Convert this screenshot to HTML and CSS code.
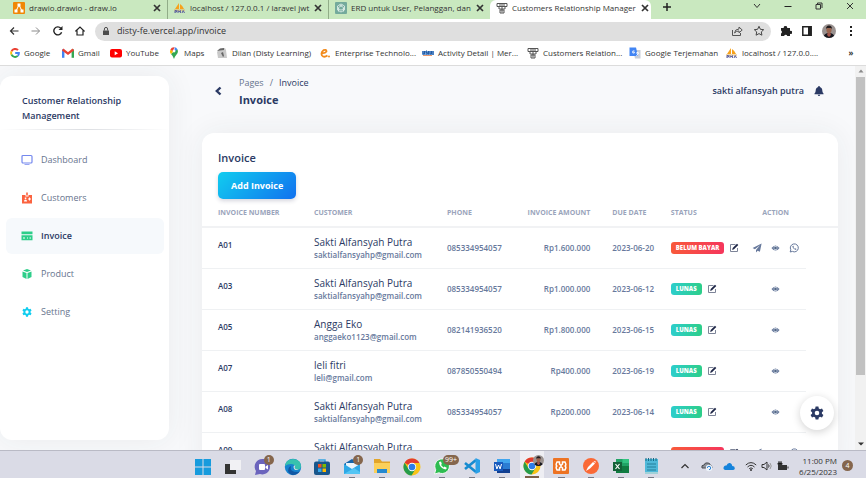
FILE: index.html
```html
<!DOCTYPE html>
<html lang="en">
<head>
<meta charset="utf-8">
<title>Customers Relationship Management</title>
<link rel="stylesheet" href="styles.css">
</head>
<body>
<svg class="sprite" aria-hidden="true">
  <symbol id="x" viewBox="0 0 10 10"><path d="M2 2l6 6M8 2L2 8" fill="none" stroke="currentColor" stroke-width="1.7"/></symbol>
  <symbol id="pma" viewBox="0 0 12 12"><path d="M5 1L1 7h4zM6 2v5h4Q9 4 6 2z" fill="#f7a21b"/><path d="M0 8h11" stroke="#e5b25c"/><path d="M1 11V8.500h1.500v1.500H1M4 11V8.500l1.200 1.500 1.200-1.500V11M8 11l1.200-2.500 1.300 2.500" fill="none" stroke="#5b5f9c"/></symbol>
  <symbol id="crm" viewBox="0 0 12 12"><path d="M1 1.500h10v3H1zM3 5v2h6V5M6 1.500v9M4 8h4v3H4zM4 2v2M8 2v2" fill="none" stroke="#555" stroke-width="1"/></symbol>
  <symbol id="edit" viewBox="0 0 10 10"><path d="M6.500 1.500h-5v7h7V5" fill="none" stroke="#7d8498" stroke-width="1"/><path d="M3.200 6.900l.5-2L8 .7l1.300 1.200L5 6.200z" fill="#1c2445"/></symbol>
  <symbol id="eye" viewBox="0 0 10 8"><path d="M.5 4Q5-1.700 9.500 4 5 9.700.5 4z" fill="#67799c"/><circle cx="5" cy="4" r="2.100" fill="#dfe4ec"/><circle cx="5" cy="4" r="1.500" fill="#526788"/></symbol>
  <symbol id="send" viewBox="0 0 10 10"><path d="M9.600.6L.6 5l2.300 1.300L8 2.200 4 7v2.600l1.600-1.900 2.300 1z" fill="#67799c"/></symbol>
  <symbol id="wa" viewBox="0 0 10 10"><path d="M1.200 9l.6-2.200A4 4 0 1 1 3.400 8.400z" fill="none" stroke="#67799c"/><path d="M3.300 3c.3 2 1.500 3.400 3.500 3.900l.7-1-1.300-.7-.6.5-1.100-1.200.4-.6-.5-1.200z" fill="#67799c"/></symbol>
  <symbol id="gear" viewBox="0 0 14 14"><path fill-rule="evenodd" d="M5.600.5h2.800l.4 1.900 1.300.8 1.900-.7 1.400 2.400-1.500 1.300v1.600l1.500 1.300-1.400 2.400-1.900-.7-1.300.8-.4 1.900H5.600l-.4-1.900-1.300-.8-1.900.7L.6 9.100l1.500-1.300V6.200L.6 4.900 2 2.500l1.900.7 1.300-.8zM7 4.700a2.300 2.300 0 1 0 0 4.600 2.300 2.300 0 0 0 0-4.600z" fill="currentColor"/></symbol>
  <symbol id="chrome" viewBox="0 0 18 18"><circle cx="9" cy="9" r="8.500" fill="#f9c316"/><path d="M9 9L1.600 4.700A8.500 8.500 0 0 1 16.400 5H9z" fill="#e33b2e"/><path d="M1.600 4.700A8.500 8.500 0 0 0 8.500 17.500L12.500 11 9 9 5.500 11z" fill="#269c4b"/><circle cx="9" cy="9" r="4.200" fill="#fff"/><circle cx="9" cy="9" r="3.300" fill="#2d7ce8"/></symbol>
  <symbol id="face" viewBox="0 0 14 14"><clipPath id="fc"><circle cx="7" cy="7" r="7"/></clipPath><g clip-path="url(#fc)"><path d="M0 0h14v14H0z" fill="#9a9290"/><path d="M1 14q1-5 6-5t6 5z" fill="#18181f"/><path d="M6 8h2l1 3-2 2-2-2z" fill="#a5544a"/><ellipse cx="7" cy="5.800" rx="2.600" ry="3.400" fill="#9a6650"/><path d="M4 5q0-3.500 3-3.500T10 5L9 4H5z" fill="#201a1c"/></g></symbol>
</svg>

<header class="browser">
  <div class="tabs">
    <div class="tab"><svg class="i12" viewBox="0 0 12 12"><rect width="12" height="12" rx="1" fill="#f08705"/><path d="M6 3L3 9M6 3l3 6" stroke="#fff"/><path d="M4.500 1.500h3v3h-3zM1.500 7.500h3v3h-3zM7.500 7.500h3v3h-3z" fill="#fff"/></svg><span>drawio.drawio - draw.io</span><button aria-label="Close tab"><svg class="i10"><use href="#x"/></svg></button></div>
    <div class="tab"><svg class="i12"><use href="#pma"/></svg><span>localhost / 127.0.0.1 / laravel jwt</span><button aria-label="Close tab"><svg class="i10"><use href="#x"/></svg></button></div>
    <div class="tab"><svg class="i12" viewBox="0 0 12 12"><rect width="12" height="12" rx="1" fill="#74aa9c"/><g fill="none" stroke="#e5f2ee" stroke-width=".8"><path d="M6 2l3.500 2v4L6 10 2.500 8V4zM4.500 3l4 2.500v4M7.500 3l-4 2.500v4M3 6.500l3 1.700 3.500-2"/></g></svg><span>ERD untuk User, Pelanggan, dan</span><button aria-label="Close tab"><svg class="i10"><use href="#x"/></svg></button></div>
    <div class="tab active"><svg class="i12"><use href="#crm"/></svg><span>Customers Relationship Manager</span><button aria-label="Close tab"><svg class="i10"><use href="#x"/></svg></button></div>
    <button class="plus" aria-label="New tab"><svg class="i10" viewBox="0 0 10 10"><path d="M5 1v8M1 5h8" stroke="#222" stroke-width="1.500"/></svg></button>
    <div class="window">
      <button aria-label="Search tabs"><svg class="i10" viewBox="0 0 10 10"><path d="M2 3l3 3.500L8 3" fill="none" stroke="#333"/></svg></button>
      <button aria-label="Minimize"><svg class="i10" viewBox="0 0 10 10"><path d="M1.500 5.500h7" stroke="#222"/></svg></button>
      <button aria-label="Restore"><svg class="i10" viewBox="0 0 10 10"><path d="M2 3.500h4.500V8H2zM3.500 3V2H8v5" fill="none" stroke="#333"/></svg></button>
      <button aria-label="Close"><svg class="i10" viewBox="0 0 10 10"><path d="M2 2l6 6M8 2L2 8" stroke="#333"/></svg></button>
    </div>
  </div>

  <div class="toolbar">
    <div class="navs">
      <button aria-label="Back"><svg class="i10" viewBox="0 0 10 10"><path d="M9.500 5H1.500M5 1.500L1.500 5 5 8.500" fill="none" stroke="#333" stroke-width="1.200"/></svg></button>
      <button aria-label="Forward"><svg class="i10" viewBox="0 0 10 10"><path d="M.5 5h8M5 1.500L8.500 5 5 8.500" fill="none" stroke="#8b8b8b"/></svg></button>
      <button aria-label="Reload"><svg class="i10" viewBox="0 0 10 10"><path d="M8.600 6.300A4 4 0 1 1 7.800 2.200" fill="none" stroke="#222" stroke-width="1.400"/><path d="M9.500 0v4h-4z" fill="#222"/></svg></button>
      <button aria-label="Home"><svg class="i10" viewBox="0 0 10 10"><path d="M.8 5L5 1l4.200 4H8v4H2V5z" fill="none" stroke="#222" stroke-width="1.200"/></svg></button>
    </div>
    <div class="omnibox">
      <svg class="i10" viewBox="0 0 10 10"><path d="M2 4.500h6V9H2z" fill="#4c4c4c"/><path d="M3.400 4.500V3a1.600 1.600 0 0 1 3.200 0v1.500" fill="none" stroke="#4c4c4c"/></svg>
      <input aria-label="Address" value="disty-fe.vercel.app/invoice">
      <button aria-label="Share"><svg class="i12" viewBox="0 0 12 12"><path d="M1.500 5v5.500h8V8M3.500 8q.5-4 4.500-4V2l3.200 3L8 7.800V6Q5 6 3.500 8z" fill="none" stroke="#555"/></svg></button>
      <button aria-label="Bookmark"><svg class="i12" viewBox="0 0 12 12"><path d="M6 1.300l1.400 3 3.300.4-2.400 2.200.6 3.300L6 8.600l-2.900 1.600.6-3.300-2.400-2.200 3.300-.4z" fill="none" stroke="#444"/></svg></button>
    </div>
    <div class="tools">
      <button aria-label="Extensions"><svg class="i12" viewBox="0 0 12 12"><path d="M1 3h2.800a1.700 1.700 0 1 1 3.300 0H10v3a1.600 1.600 0 1 1 0 2.800V11H7.300a1.700 1.700 0 0 0-3.200 0H1V8.600a1.700 1.700 0 0 0 0-3z" fill="#222"/></svg></button>
      <button aria-label="Side panel"><svg class="i12" viewBox="0 0 12 12"><path d="M1.800 1.800h8.400v8.400H1.800z" fill="none" stroke="#222" stroke-width="1.500"/><path d="M7 2h3v8H7z" fill="#222"/></svg></button>
      <button aria-label="Profile"><svg class="i14"><use href="#face"/></svg></button>
      <button aria-label="Menu"><svg class="i12" viewBox="0 0 12 12"><path d="M5 1h2v2H5zM5 5h2v2H5zM5 9h2v2H5z" fill="#222"/></svg></button>
    </div>
  </div>

  <nav class="bookmarks" aria-label="Bookmarks">
    <a href="#"><svg class="i10" viewBox="0 0 10 10"><g fill="none" stroke-width="1.900"><path d="M8 2.200A3.900 3.900 0 0 0 1.500 3.400" stroke="#ea4335"/><path d="M1.500 3.400a3.900 3.900 0 0 0 0 3.200" stroke="#fbbc05"/><path d="M1.500 6.600A3.900 3.900 0 0 0 7.700 7.900" stroke="#34a853"/><path d="M7.700 7.900A3.700 3.700 0 0 0 8.900 5H5.200" stroke="#4285f4"/></g></svg>Google</a>
    <a href="#"><svg class="i12" viewBox="0 0 10 10"><path d="M1 9V2" stroke="#4285f4" stroke-width="2"/><path d="M9 9V2" stroke="#34a853" stroke-width="2"/><path d="M.5 2L5 5.500 9.500 2" fill="none" stroke="#ea4335" stroke-width="2"/></svg>Gmail</a>
    <a href="#"><svg class="i12" viewBox="0 0 12 12"><rect y="2" width="12" height="8.500" rx="2" fill="#f00"/><path d="M4.700 4.300v4L8 6.300z" fill="#fff"/></svg>YouTube</a>
    <a href="#"><svg class="i12" viewBox="0 0 10 10"><path d="M5 10Q4 7 2.500 5.800L7.500 1.500Q9.300 4 7 6.500 5.500 8 5 10z" fill="#34a853"/><path d="M2.500 6Q1 4 2 2l2.500 1.500z" fill="#fbbc05"/><path d="M2 2q1-2 3.500-1.700L4 3.600z" fill="#ea4335"/><path d="M5.500.3q1.500.2 2.300 1.500L5.500 4z" fill="#4285f4"/><circle cx="5" cy="3.400" r="1.200" fill="#fff"/></svg>Maps</a>
    <a href="#"><svg class="i12" viewBox="0 0 12 12"><path d="M1 5l2-3 6-1 1 2 1 8H2z" fill="#c9c9c9"/><path d="M1 4l3-2.500 4-.5v2L4 3.500zM5 6l2-1 1 4-1 1" fill="#666"/></svg>Dilan (Disty Learning)</a>
    <a href="#"><svg class="i12" viewBox="0 0 12 12"><path d="M8.500 8.500Q5 11 3 8.500 1.500 5.500 4.500 3.200 7.500 2 7.500 4.500 6 6.500 2.800 6" fill="none" stroke="#f28b1d" stroke-width="1.800"/><circle cx="10" cy="9.500" r="1" fill="#f28b1d"/></svg>Enterprise Technolo...</a>
    <a href="#"><svg class="i12" viewBox="0 0 12 12"><path d="M0 4h12v4H0z" fill="#76a7dc"/><path d="M1 4v3h1.500V4M5 4H4v1.500h1.300V7H4M6.500 4v3.500M8 4v3h1.500V4M11 4v4" fill="none" stroke="#225ba5"/><path d="M1 8.500h9" stroke="#e9986d"/></svg>Activity Detail | Mer...</a>
    <a href="#"><svg class="i12"><use href="#crm"/></svg>Customers Relation...</a>
    <a href="#"><svg class="i12" viewBox="0 0 12 12"><path d="M4 3h7.500v8.500H6z" fill="#c8ced8"/><path d="M.5.500H7L9 9H.5z" fill="#4285f4"/><path d="M5.500 4H3.800v2h1.500V5M7 6h3M8.500 5v1M7.500 9l2-3" fill="none" stroke="#fff" stroke-width=".9"/></svg>Google Terjemahan</a>
    <a href="#"><svg class="i12"><use href="#pma"/></svg>localhost / 127.0.0....</a>
    <button class="more" aria-label="More bookmarks">»</button>
  </nav>
</header>

<div class="app">
  <aside class="sidebar">
    <h1>Customer Relationship Management</h1>
    <hr>
    <nav>
      <a href="#"><svg class="i12" viewBox="0 0 12 12"><rect x="1" y="1.500" width="10" height="7.500" rx="1" fill="none" stroke="#7488ee" stroke-width="1.200"/><path d="M3.500 10.500h5" stroke="#9aa7f3"/></svg>Dashboard</a>
      <a href="#"><svg class="i12" viewBox="0 0 12 12"><path d="M1 3h3.500v1.500h3V3H11v8.500H1zM5.200.5h1.600v3H5.200z" fill="#fb6340"/><path d="M3 9.500q0-2 1.500-2T6 9.500zM3.800 5.500h1.500v1.500H3.800zM7 6.500h3v1H7zM8 5.500h1v3H8z" fill="#fff"/></svg>Customers</a>
      <a href="#" class="current" aria-current="page"><svg class="i12" viewBox="0 0 12 12"><path d="M.5 1.500h11v2.800H.5zM.5 5.300h11v5H.5z" fill="#2dce89"/><path d="M2 8h2M6 8h1M8.500 8h1.500" stroke="#fff"/></svg>Invoice</a>
      <a href="#"><svg class="i12" viewBox="0 0 12 12"><path d="M6 1l4 1.500L6 4 2 2.500zM1.500 3.500l4 1.500v6L1.500 9zM10.500 3.500l-4 1.500v6l4-2z" fill="#2dce89"/></svg>Product</a>
      <a href="#" class="setting"><svg class="i10"><use href="#gear"/></svg>Setting</a>
    </nav>
  </aside>

  <main>
    <div class="pagebar">
      <button class="back" aria-label="Go back"><svg class="i10" viewBox="0 0 10 10"><path d="M7.500 1.500L3.800 5l3.700 3.500" fill="none" stroke="#2b3a64" stroke-width="2.400"/></svg></button>
      <div class="crumbs">
        <p><a href="#">Pages</a><i>/</i>Invoice</p>
        <h2>Invoice</h2>
      </div>
      <span class="user">sakti alfansyah putra</span>
      <button class="bell" aria-label="Notifications"><svg class="i10" viewBox="0 0 10 10"><path d="M4.300 0h1.400v1q2.600.6 2.600 3.500 0 2 1.200 3v.8H.5v-.8q1.200-1 1.200-3Q1.700 1.600 4.300 1zM3.700 8.800h2.600Q6 10 5 10t-1.300-1.200z" fill="#2b3a64"/></svg></button>
    </div>

    <section class="card">
      <div class="cardhead">
        <h3>Invoice</h3>
        <button class="add">Add Invoice</button>
      </div>
      <table>
        <colgroup><col class="c-no"><col class="c-cust"><col class="c-phone"><col class="c-amt"><col class="c-due"><col class="c-stat"><col class="c-act"><col></colgroup>
        <thead>
          <tr><th>Invoice Number</th><th>Customer</th><th>Phone</th><th class="amt">Invoice Amount</th><th>Due Date</th><th>Status</th><th class="act">Action</th><th></th></tr>
        </thead>
        <tbody>
          <tr><td class="no">A01</td><td><strong>Sakti Alfansyah Putra</strong><small>saktialfansyahp@gmail.com</small></td><td>085334954057</td><td class="amt">Rp1.600.000</td><td>2023-06-20</td><td><div class="status"><span class="badge due">Belum Bayar</span><button aria-label="Edit status"><svg class="i10"><use href="#edit"/></svg></button></div></td><td class="act"><div class="actions"><button aria-label="Send"><svg class="i10"><use href="#send"/></svg></button><button aria-label="View"><svg class="eye"><use href="#eye"/></svg></button><button aria-label="WhatsApp"><svg class="i10"><use href="#wa"/></svg></button></div></td></tr>
          <tr><td class="no">A03</td><td><strong>Sakti Alfansyah Putra</strong><small>saktialfansyahp@gmail.com</small></td><td>085334954057</td><td class="amt">Rp1.000.000</td><td>2023-06-12</td><td><div class="status"><span class="badge">Lunas</span><button aria-label="Edit status"><svg class="i10"><use href="#edit"/></svg></button></div></td><td class="act"><div class="actions"><button aria-label="View"><svg class="eye"><use href="#eye"/></svg></button></div></td></tr>
          <tr><td class="no">A05</td><td><strong>Angga Eko</strong><small>anggaeko1123@gmail.com</small></td><td>082141936520</td><td class="amt">Rp1.800.000</td><td>2023-06-15</td><td><div class="status"><span class="badge">Lunas</span><button aria-label="Edit status"><svg class="i10"><use href="#edit"/></svg></button></div></td><td class="act"><div class="actions"><button aria-label="View"><svg class="eye"><use href="#eye"/></svg></button></div></td></tr>
          <tr><td class="no">A07</td><td><strong>leli fitri</strong><small>leli@gmail.com</small></td><td>087850550494</td><td class="amt">Rp400.000</td><td>2023-06-19</td><td><div class="status"><span class="badge">Lunas</span><button aria-label="Edit status"><svg class="i10"><use href="#edit"/></svg></button></div></td><td class="act"><div class="actions"><button aria-label="View"><svg class="eye"><use href="#eye"/></svg></button></div></td></tr>
          <tr><td class="no">A08</td><td><strong>Sakti Alfansyah Putra</strong><small>saktialfansyahp@gmail.com</small></td><td>085334954057</td><td class="amt">Rp200.000</td><td>2023-06-14</td><td><div class="status"><span class="badge">Lunas</span><button aria-label="Edit status"><svg class="i10"><use href="#edit"/></svg></button></div></td><td class="act"><div class="actions"><button aria-label="View"><svg class="eye"><use href="#eye"/></svg></button></div></td></tr>
          <tr><td class="no">A09</td><td><strong>Sakti Alfansyah Putra</strong><small>&nbsp;</small></td><td></td><td></td><td></td><td><div class="status"><span class="badge due">Belum Bayar</span><button aria-label="Edit status"><svg class="i10"><use href="#edit"/></svg></button></div></td><td class="act"><div class="actions"><button aria-label="Send"><svg class="i10"><use href="#send"/></svg></button><button aria-label="View"><svg class="eye"><use href="#eye"/></svg></button><button aria-label="WhatsApp"><svg class="i10"><use href="#wa"/></svg></button></div></td></tr>
        </tbody>
      </table>
    </section>
  </main>

  <div class="scroll" aria-hidden="true">
    <svg viewBox="0 0 8 6"><path d="M1.500 4.500L4 1.500l2.500 3z" fill="#8a8a8a"/></svg>
    <div class="track"><div class="thumb"></div></div>
    <svg viewBox="0 0 8 6"><path d="M1 1.500L4 4.500l3-3z" fill="#333"/></svg>
  </div>
  <button class="fab" aria-label="Configure"><svg class="i14"><use href="#gear"/></svg></button>
</div>

<footer class="taskbar">
  <div class="apps">
    <button aria-label="Start"><svg class="i18" viewBox="0 0 18 18"><path d="M1 1h7.500v7.500H1zM9.500 1H17v7.500H9.500zM1 9.500h7.500V17H1zM9.500 9.500H17V17H9.500z" fill="#179bdd"/></svg></button>
    <button aria-label="Task view"><svg class="i18" viewBox="0 0 18 18"><path d="M1 6h11v10H1z" fill="#333"/><path d="M6 2h11v10H6z" fill="#f1f1f4"/></svg></button>
    <button aria-label="Chat"><svg class="i18" viewBox="0 0 18 18"><path d="M1 17l1-4A7.700 7.700 0 1 1 6 16z" fill="#6b64bd"/><rect x="5" y="6" width="6" height="6" rx="1" fill="#fff"/><path d="M11.500 8.500L14 7v4.500L11.500 10z" fill="#fff"/></svg><span class="count">1</span></button>
    <button aria-label="Edge"><svg class="i18" viewBox="0 0 18 18"><circle cx="9" cy="9" r="8.200" fill="#1683cf"/><path d="M1 8Q2 1 9.500 1 17 2 17 8q0 4-5 4-3-.5-1-3 0-3-4-3-3.500 0-6 2z" fill="#38c2ae"/><path d="M7 8q-2 6 7 6l2-1q-3 4.500-8 4-5-2-3.500-6.500Q5 8.500 7 8z" fill="#1057a4"/><path d="M9.500 9q0-2 1.800-1.500Q10 9.500 11.500 11l3 .8Q10 13 9.500 9z" fill="#dadbe6"/></svg></button>
    <button aria-label="Store"><svg class="i18" viewBox="0 0 18 18"><path d="M6 4V2h6v2" fill="none" stroke="#36a4df" stroke-width="1.500"/><rect x="1" y="3.500" width="16" height="13.500" rx="2" fill="#18568c"/><path d="M5 6h3.500v3.500H5z" fill="#f25022"/><path d="M9.500 6H13v3.500H9.500z" fill="#7fba00"/><path d="M5 10.500h3.500V14H5z" fill="#35a7ec"/><path d="M9.500 10.500H13V14H9.500z" fill="#ffb900"/></svg></button>
    <button class="open" aria-label="Mail"><svg class="i18" viewBox="0 0 18 18"><path d="M1 7l8-5 8 5v9H1z" fill="#1264ab"/><path d="M3 6h12v6l-6 3-6-3z" fill="#e9f5fc"/><path d="M1 7l8 5 8-5v10H1z" fill="#2ea8e6"/><path d="M1 17l10-6 6 4v2z" fill="#53c5f4"/></svg><span class="count">1</span></button>
    <button class="open" aria-label="File Explorer"><svg class="i18" viewBox="0 0 18 18"><path d="M1 2h6l2 2.500h8V13H1z" fill="#e2a52a"/><path d="M1 6h16v10H1z" fill="#fbd05a"/><path d="M4 12h10v4H4z" fill="#2589cf"/></svg></button>
    <button aria-label="Chrome"><svg class="i18"><use href="#chrome"/></svg></button>
    <button class="open" aria-label="WhatsApp"><svg class="i18" viewBox="0 0 18 18"><path d="M1.500 17l1.200-4.300A7.300 7.300 0 1 1 6 15.800z" fill="#2ebc51" stroke="#f5f8f5"/><path d="M6 5q.5 6 6.500 7.500L14 11l-2.500-1.500-1 1L8 8l.8-1L8 4.500z" fill="#fff"/></svg><span class="count">99+</span></button>
    <button class="open" aria-label="Visual Studio Code"><svg class="i18" viewBox="0 0 18 18"><path d="M13 3L2 12M13 15L2 6" stroke="#168bd0" stroke-width="2.600"/><path d="M12.500 1L17 3v12l-4.500 2z" fill="#2aa0e7"/></svg></button>
    <button class="open" aria-label="Word"><svg class="i18" viewBox="0 0 18 18"><path d="M4 2h13v14H4z" fill="#2b7cd3"/><path d="M4 2h13v4H4z" fill="#41a5ee"/><path d="M4 12h13v4H4z" fill="#103f91"/><path d="M1 5h9v9H1z" fill="#185abd"/><path d="M2.500 7l1.400 5 1.600-4 1.600 4 1.400-5" fill="none" stroke="#fff"/></svg></button>
    <button class="open focus" aria-label="Chrome window"><svg class="i18"><use href="#chrome"/></svg><svg class="who"><use href="#face"/></svg></button>
    <button class="open" aria-label="XAMPP"><svg class="i18" viewBox="0 0 18 18"><rect x="1" y="1" width="16" height="16" rx="1" fill="#ed7323"/><path d="M5 5h2.500v2L9 8.500 10.500 7V5H13q2 4-.5 4 2.500 0 .5 4h-2.500v-2L9 9.500 7.500 11v2H5q-2-4 .5-4Q3 9 5 5z" fill="none" stroke="#fff" stroke-width="1.500"/></svg></button>
    <button class="open" aria-label="Postman"><svg class="i18" viewBox="0 0 18 18"><circle cx="9" cy="9" r="8" fill="#fa6936"/><path d="M4 14l2-4 5-5 2 1.500-5 5zM11.500 4.500l2-.5v2z" fill="#fff"/></svg></button>
    <button class="open" aria-label="Excel"><svg class="i18" viewBox="0 0 18 18"><path d="M4 2h13v14H4z" fill="#21a366"/><path d="M10.500 2H17v4h-6.500z" fill="#33c481"/><path d="M4 9h13v7H4z" fill="#107c41"/><path d="M1 5h9v9H1z" fill="#146239"/><path d="M3.500 7l4 5M7.500 7l-4 5" stroke="#fff" stroke-width="1.200"/></svg></button>
    <button class="open" aria-label="Notepad"><svg class="i18" viewBox="0 0 18 18"><path d="M3 2h13v15H3z" fill="#50b9d9"/><path d="M4 1v3M6.500 1v3M9 1v3M11.500 1v3M14 1v3" stroke="#156b87"/><path d="M5 7h9M5 10h9M5 13h9" stroke="#257f9b"/><path d="M3 16h13" stroke="#f2ead8"/></svg></button>
  </div>
  <div class="tray">
    <svg class="i12" viewBox="0 0 12 12"><path d="M2.500 8L6 4.500 9.500 8" fill="none" stroke="#333" stroke-width="1.200"/></svg>
    <svg class="i12" viewBox="0 0 12 12"><path d="M1 8q-1-3 2-3 1-3 4-2 2 0 2 2 2 0 2 3z" fill="#8d9199" stroke="#4a4d52"/><circle cx="8" cy="8" r="3.200" fill="#eef4fb"/><path d="M6.300 8a1.700 1.700 0 1 1 1.700 1.700" fill="none" stroke="#2f86d6"/></svg>
    <svg class="i12" viewBox="0 0 12 12"><path d="M2 10Q-.5 9 1 6.500 2 5 3.500 5.500 4.500 2.500 7 3q2 .5 2.300 3 2.700 0 2.500 2.500-.3 1.500-2 1.500z" fill="#1583db"/></svg>
    <div class="status-icons">
      <svg class="i12" viewBox="0 0 12 12"><path d="M.8 5Q6 .2 11.200 5M2.500 7Q6 3.600 9.500 7M4.200 8.700Q6 7 7.800 8.700" fill="none" stroke="#333"/><circle cx="6" cy="10" r="1" fill="#333"/></svg>
      <svg class="i12" viewBox="0 0 12 12"><path d="M1 4.500h2L6 2v8L3 7.500H1z" fill="none" stroke="#333"/><path d="M7.500 4.500q1.200 1.500 0 3" fill="none" stroke="#333"/><path d="M9 3q2.500 3 0 6" fill="none" stroke="#999"/></svg>
      <svg class="i12" viewBox="0 0 12 12"><path d="M1 5h9v5H1zM10.500 6.500h1v2h-1z" fill="#333"/><path d="M2 1v2M4 1v2M1 3h4v1.500H1z" stroke="#333"/></svg>
    </div>
    <time>11:00 PM<br>6/25/2023</time>
    <span class="notice">4</span>
  </div>
</footer>
</body>
</html>
```
FILE: styles.css
```css
* { box-sizing: border-box; }
body {
  margin: 0; height: 100vh; display: flex; flex-direction: column; overflow: hidden;
  font: 9px/12px "Open Sans", "Noto Sans", sans-serif; color: #2b3a64; background: #f8f9fb;
}
button { border: 0; padding: 0; margin: 0; background: none; font: inherit; color: inherit; display: flex; align-items: center; justify-content: center; }
a { color: inherit; text-decoration: none; }
h1, h2, h3, p { margin: 0; }
svg { display: block; flex: none; }
.sprite { position: absolute; width: 0; height: 0; }
.i10 { width: 10px; height: 10px; }
.i12 { width: 12px; height: 12px; }
.i14 { width: 14px; height: 14px; }
.i18 { width: 18px; height: 18px; }

/* Browser chrome */
.browser { flex: none; background: #fff; color: #333; font-size: 8px; border-bottom: 1px solid #dcdcdc; }
.tabs { display: flex; height: 19px; background: #c9e8bf; padding-left: 7px; }
.tab { width: 161px; flex: none; display: flex; align-items: center; gap: 4px; padding: 0 5px 4px 6px; border-right: 1px solid #91ad88; background-clip: padding-box; }
.tab span { flex: 1; white-space: nowrap; }
.tab:nth-child(3) { border-color: transparent; }
.tab.active { background: #fff; border: 0; border-radius: 6px 6px 0 0; }
.plus { margin-left: 9px; height: 14px; width: 14px; }
.window { margin-left: auto; display: flex; align-items: center; gap: 21px; padding: 0 11px 8px 0; }
.toolbar { display: flex; align-items: center; height: 24px; padding: 0 9px; }
.navs { display: flex; gap: 12px; width: 86px; }
.omnibox { flex: 1; display: flex; align-items: center; height: 19px; border-radius: 10px; background: #dfdfdf; padding: 0 6px; }
.omnibox input { flex: 1; min-width: 0; border: 0; outline: 0; padding: 0 6px; background: none; font: inherit; font-size: 9px; color: #333; }
.omnibox button { margin-left: 10px; }
.tools { display: flex; align-items: center; gap: 9px; margin-left: 9px; }
.bookmarks { display: grid; grid-template-columns: 52px 48px 58px 48px 103px 103px 105px 102px 97px 1fr 12px; height: 22px; align-items: center; padding: 0 9px 2px 10px; }
.bookmarks a { display: flex; align-items: center; gap: 4px; white-space: nowrap; }
.more { font-weight: 700; }

/* App shell */
.app { position: relative; flex: 1; min-height: 0; display: flex; overflow: hidden; }
.sidebar { flex: none; width: 169px; margin: 10px 33px 10px 0; background: #fff; border-radius: 12px; box-shadow: 0 0 30px rgba(40, 50, 60, .07); }
.sidebar h1 { font-size: 9px; line-height: 15px; font-weight: 600; padding: 17px 40px 6px 22px; }
.sidebar hr { height: 1px; border: 0; margin: 0 0 12px; background: linear-gradient(90deg, transparent, #dcdee2, transparent); }
.sidebar nav { padding: 0 5px 0 6px; display: grid; gap: 2px; }
.sidebar nav a { display: flex; align-items: center; gap: 8px; height: 36px; padding-left: 15px; border-radius: 6px; color: #67748e; }
.sidebar nav .current { background: #f6f9fc; color: #2b3a64; font-weight: 600; }
.sidebar nav .setting { padding-left: 16px; gap: 9px; }
.setting svg { color: #11cdef; }
main { flex: 1; min-width: 0; }
.pagebar { display: flex; align-items: center; height: 49px; padding: 0 14px 0 11px; }
.back { width: 10px; }
.crumbs { margin-left: 16px; flex: 1; }
.crumbs p { font-size: 9px; line-height: 17px; }
.crumbs a { color: #67748e; }
.crumbs i { font-style: normal; padding: 0 6px; color: #67748e; }
.crumbs h2 { font-size: 11px; line-height: 17px; font-weight: 700; }
.user { font-weight: 600; }
.bell { margin-left: 10px; }
.card { margin-top: 18px; background: #fff; border-radius: 12px; box-shadow: 0 0 30px rgba(40, 50, 60, .07); }
.cardhead { padding: 17px 16px 0; }
.cardhead h3 { font-size: 11px; line-height: 16px; font-weight: 600; }
.add { margin-top: 6px; height: 27px; padding: 0 13px; border-radius: 5px; color: #fff; font-weight: 700; background: linear-gradient(135deg, #11cdef, #1171ef); box-shadow: 0 2px 4px rgba(50, 50, 90, .2); }

/* Invoice table */
table { width: 100%; table-layout: fixed; border-collapse: collapse; }
.c-no { width: 15.1%; } .c-cust { width: 20.9%; } .c-phone { width: 12.6%; } .c-amt { width: 13.4%; }
.c-due { width: 9.2%; } .c-stat { width: 14.2%; } .c-act { width: 9.6%; }
th, td { padding: 1px 0 0 16px; text-align: left; white-space: nowrap; }
th { height: 28px; font-size: 7px; font-weight: 700; text-transform: uppercase; color: #9aa4bb; border-bottom: 2px solid #f1f2f4; }
td { height: 41px; font-size: 8px; font-weight: 600; color: #67799c; border-bottom: 1px solid #eff1f3; }
.no { color: #2b3a64; vertical-align: top; padding-top: 11px; }
.amt { text-align: right; padding: 1px 6px 0 0; }
.act { text-align: center; padding: 1px 0 0; }
td strong, td small { display: block; }
td strong { font-size: 10px; line-height: 13px; font-weight: 500; color: #2b3a64; }
td small { font-size: 8px; line-height: 12px; }
tr:last-child td { border: 0; }
.status { display: flex; align-items: center; gap: 5px; }
.badge { height: 12px; padding: 0 5px; border-radius: 3px; font-size: 6px; line-height: 12px; font-weight: 800; color: #fff; text-transform: uppercase; background: linear-gradient(90deg, #2dcecc, #2dce89); }
.badge.due { background: linear-gradient(90deg, #f8593a, #f5365c); }
.actions { display: flex; justify-content: center; gap: 9px; }
.eye { width: 9px; height: 8px; }

.scroll { flex: none; width: 11px; margin-left: 17px; background: #f1f1f1; display: flex; flex-direction: column; align-items: center; padding: 2px 0 3px; }
.scroll svg { width: 8px; height: 6px; }
.track { flex: 1; width: 9px; margin: 3px 0 0; }
.thumb { height: 82%; background: #c1c1c1; }
.fab { position: absolute; right: 32px; bottom: 20px; width: 34px; height: 34px; border-radius: 50%; background: #fff; box-shadow: 0 2px 8px rgba(0, 0, 0, .18); }

/* Taskbar */
.taskbar { flex: none; display: flex; height: 28px; background: #dadbe6; border-top: 1px solid #b9bac5; color: #333; padding: 0 13px 0 188px; }
.apps { display: grid; grid-template-columns: repeat(16, 1fr); width: 478px; }
.apps button { position: relative; height: 27px; padding-top: 4px; }
.apps .open { border-bottom: 1px solid #777985; background-clip: padding-box; border-image: linear-gradient(90deg, transparent 40%, #777985 40% 60%, transparent 60%) 1; }
.apps .focus { background: #eeeef3; margin: 0 3px; border-image: linear-gradient(90deg, transparent 25%, #7d6047 25% 75%, transparent 75%) 1; border-bottom-width: 2px; }
.count { position: absolute; top: 4px; left: 16px; min-width: 10px; height: 10px; padding: 0 2px; border-radius: 5px; background: #85664d; color: #fff; font-size: 7px; line-height: 10px; }
.who { position: absolute; top: 4px; right: 0; width: 11px; height: 11px; }
.tray { margin-left: auto; display: flex; align-items: center; gap: 10px; padding-top: 2px; }
.status-icons { display: flex; gap: 4px; }
.tray time { font-size: 8px; line-height: 11px; text-align: right; }
.notice { width: 11px; height: 11px; border-radius: 50%; background: #85664d; color: #fff; font-size: 7px; line-height: 11px; text-align: center; margin-left: -5px; }
```
